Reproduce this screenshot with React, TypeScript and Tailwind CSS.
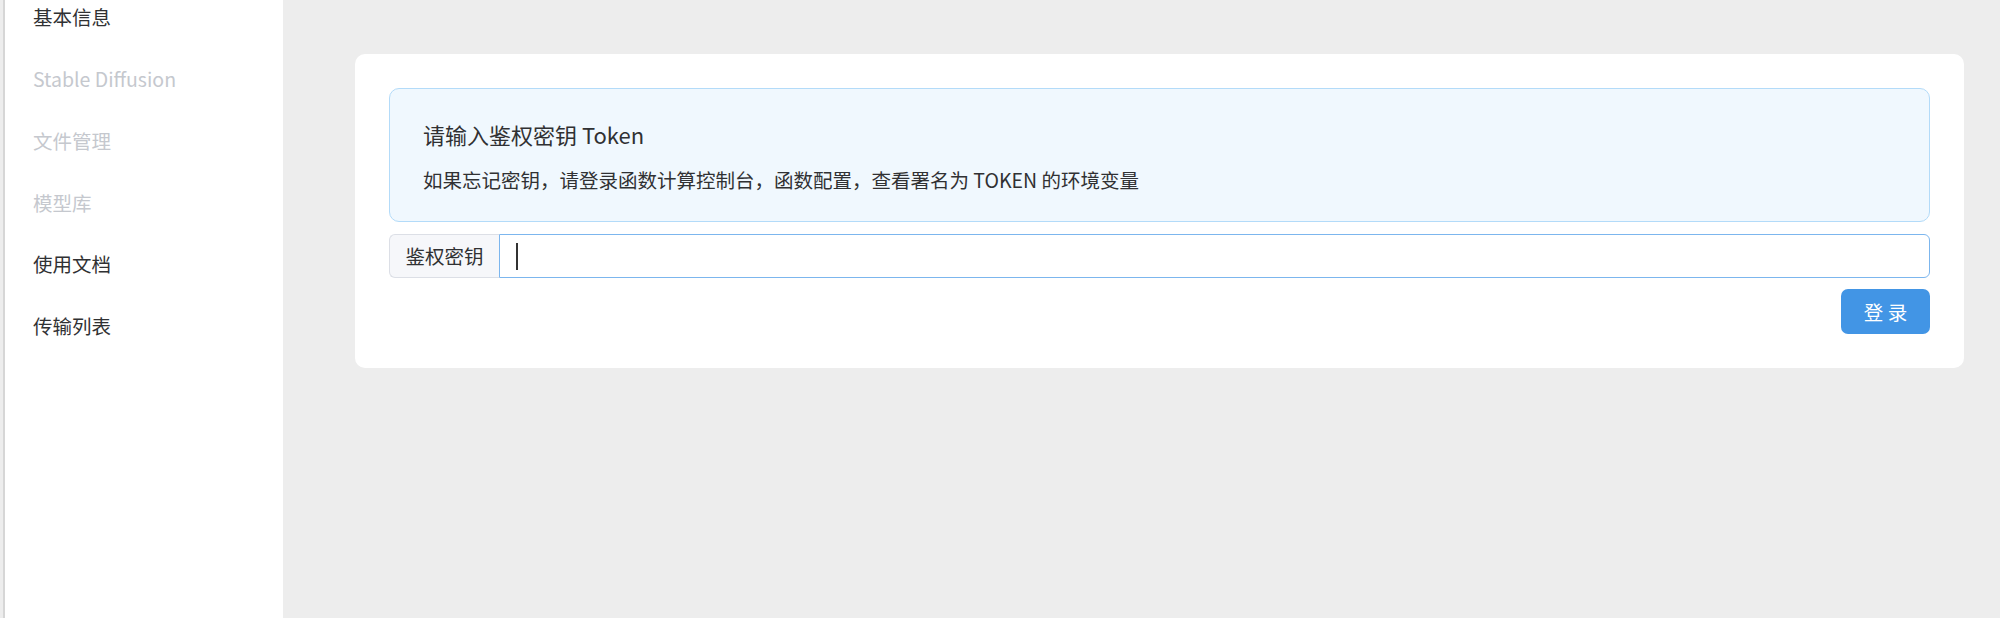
import React from 'react'

const font = { fontFamily: '"Noto Sans CJK SC", "Noto Sans", sans-serif' }

const menu = [
  { label: '基本信息', enabled: true },
  { label: 'Stable Diffusion', enabled: false },
  { label: '文件管理', enabled: false },
  { label: '模型库', enabled: false },
  { label: '使用文档', enabled: true },
  { label: '传输列表', enabled: true },
]

function Sidebar() {
  return (
    <div className="flex h-full shrink-0">
      <div className="w-[3px] bg-[#ededed]" />
      <aside className="w-[280px] h-full bg-white border-l-2 border-[#d6d6d6] overflow-hidden">
        <ul className="-mt-[14px]">
          {menu.map((item) => (
            <li
              key={item.label}
              className={`h-[61.8px] flex items-center pl-[28px] text-[19.5px] leading-none ${
                item.enabled ? 'text-[#303133]' : 'text-[#c5c8ce]'
              }`}
            >
              {item.label}
            </li>
          ))}
        </ul>
      </aside>
    </div>
  )
}

function LoginCard() {
  return (
    <div className="bg-white rounded-[10px] p-[34px] flex flex-col">
      {/* Notice */}
      <div className="h-[134px] rounded-[10px] border border-[#b3dbf9] bg-[#f0f8fe] pl-[33px] flex flex-col">
        <div className="h-[22px] mt-[34px] flex items-center text-[22px] leading-none text-[#303133]">
          请输入鉴权密钥 Token
        </div>
        <div className="h-[20px] mt-[25px] flex items-center text-[19.5px] leading-none text-[#303133]">
          如果忘记密钥，请登录函数计算控制台，函数配置，查看署名为 TOKEN 的环境变量
        </div>
      </div>

      {/* Token input */}
      <div className="mt-[12px] h-[44px] flex">
        <div className="w-[110px] shrink-0 flex items-center justify-center bg-[#f6f7fa] border border-r-0 border-[#dcdfe6] rounded-l-[6px] text-[19.5px] leading-none text-[#303133]">
          鉴权密钥
        </div>
        <div className="flex-1 flex items-center pl-[16px] border border-[#7cb6ee] rounded-r-[6px] bg-white">
          <div className="w-[1.5px] h-[27px] bg-[#333]" />
        </div>
      </div>

      <button className="mt-[11px] self-end w-[89px] h-[45px] rounded-[7px] bg-[#4295e5] text-white text-[19.5px] leading-none flex items-center justify-center">
        登 录
      </button>
    </div>
  )
}

export default function App() {
  return (
    <div className="w-[2000px] h-[618px] flex bg-[#ededed] overflow-hidden" style={font}>
      <Sidebar />
      <main className="flex-1 pl-[72px] pr-[36px] pt-[54px]">
        <LoginCard />
      </main>
    </div>
  )
}
